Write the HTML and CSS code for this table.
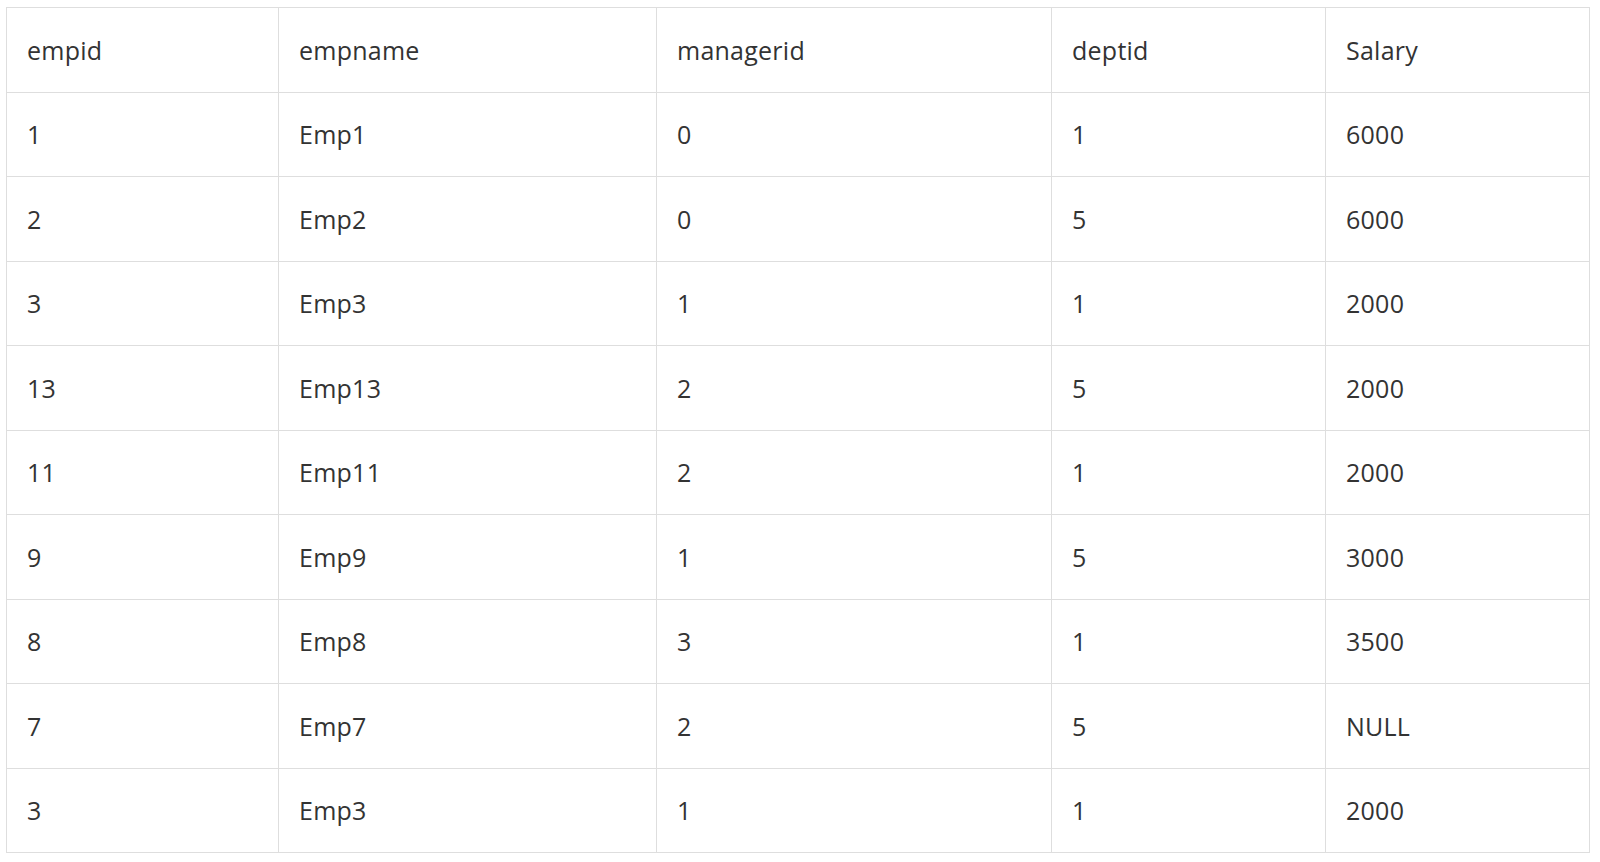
FILE: index.html
```html
<!DOCTYPE html>
<html>
<head>
<meta charset="utf-8">
<link rel="stylesheet" href="styles.css">
</head>
<body>
<table class="data">
  <colgroup>
    <col class="c1"><col class="c2"><col class="c3"><col class="c4"><col class="c5">
  </colgroup>
  <tr><td>empid</td><td>empname</td><td>managerid</td><td>deptid</td><td>Salary</td></tr>
  <tr><td>1</td><td>Emp1</td><td>0</td><td>1</td><td>6000</td></tr>
  <tr><td>2</td><td>Emp2</td><td>0</td><td>5</td><td>6000</td></tr>
  <tr><td>3</td><td>Emp3</td><td>1</td><td>1</td><td>2000</td></tr>
  <tr><td>13</td><td>Emp13</td><td>2</td><td>5</td><td>2000</td></tr>
  <tr><td>11</td><td>Emp11</td><td>2</td><td>1</td><td>2000</td></tr>
  <tr><td>9</td><td>Emp9</td><td>1</td><td>5</td><td>3000</td></tr>
  <tr><td>8</td><td>Emp8</td><td>3</td><td>1</td><td>3500</td></tr>
  <tr><td>7</td><td>Emp7</td><td>2</td><td>5</td><td>NULL</td></tr>
  <tr><td>3</td><td>Emp3</td><td>1</td><td>1</td><td>2000</td></tr>
</table>
</body>
</html>
```

FILE: styles.css
```css
html, body {
  margin: 0;
  padding: 0;
  background: #ffffff;
}
body {
  padding: 7px 0 0 6px;
  font-family: "Open Sans", "Liberation Sans", sans-serif;
  color: #333333;
}
.data {
  border-collapse: collapse;
  table-layout: fixed;
  width: 1583px;
  font-size: 25px;
  letter-spacing: 0.25px;
}
.c1 { width: 272px; }
.c2 { width: 378px; }
.c3 { width: 395px; }
.c4 { width: 274px; }
.c5 { width: 264px; }
.data td {
  border: 1px solid #dedede;
  padding: 0 20px;
  height: 83.5px;
  line-height: 36px;
  vertical-align: middle;
  white-space: nowrap;
}
```
